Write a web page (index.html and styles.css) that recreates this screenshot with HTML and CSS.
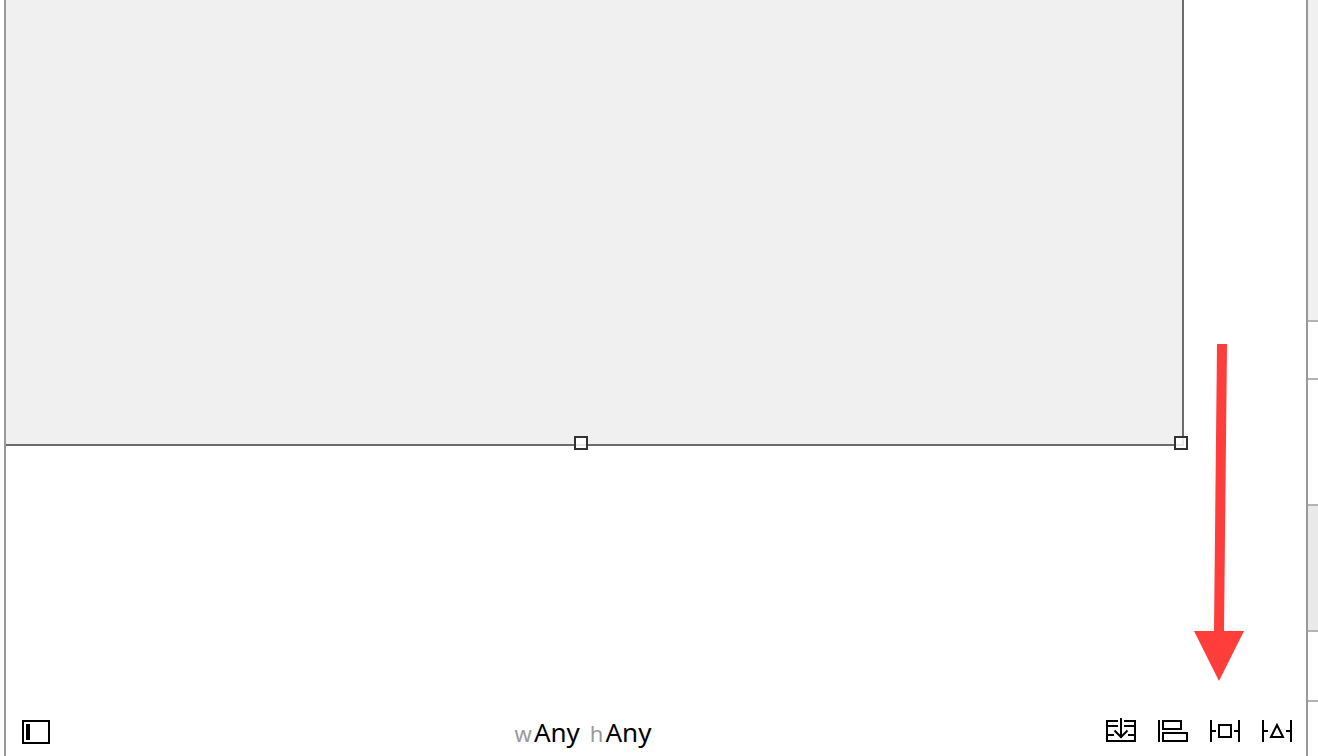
FILE: index.html
```html
<!DOCTYPE html>
<html lang="en">
<head>
<meta charset="utf-8">
<title>Interface Builder</title>
<link rel="stylesheet" href="styles.css">
</head>
<body>
<div class="workspace">
  <main class="editor">
    <section class="canvas" aria-label="Canvas">
      <div class="scene">
        <span class="handle handle-bottom"></span>
        <span class="handle handle-corner"></span>
      </div>
      <svg class="pointer" width="50" height="338" viewBox="0 0 50 338" aria-hidden="true">
        <path fill="#ff3d3a" d="M23 0H33L30 287H50L25 337L0 287H20Z"/>
      </svg>
    </section>
    <footer class="bar">
      <button class="tool" aria-label="Toggle document outline">
        <svg width="28" height="24" viewBox="0 0 28 24"><path class="line" d="M1 1H27V23H1Z"/><path d="M4 4H8V20H4Z"/></svg>
      </button>
      <button class="size-class"><span class="axis">w</span><span class="value">Any</span><span class="axis axis-height">h</span><span class="value">Any</span></button>
      <div class="tools">
        <button class="tool" aria-label="Stack">
          <svg width="30" height="24" viewBox="0 0 30 24"><path class="line" d="M12 3H1V23H29V3H18M1 8H12M18 8H29M1 17H8M22 17H29M15 0V20"/><path class="line" d="M8.500 12.500L15 19L21.500 12.500"/></svg>
        </button>
        <button class="tool" aria-label="Align">
          <svg width="30" height="24" viewBox="0 0 30 24"><path class="line" d="M1 2V24M5 3H23V11H5ZM5 15H29V23H5Z"/></svg>
        </button>
        <button class="tool" aria-label="Pin">
          <svg width="30" height="24" viewBox="0 0 30 24"><path class="line" d="M1 2V24M29 2V24M2 13H6M24 13H28M9 7H21V19H9Z"/></svg>
        </button>
        <button class="tool" aria-label="Resolve Auto Layout issues">
          <svg width="30" height="24" viewBox="0 0 30 24"><path class="line" d="M1 2V24M29 2V24M2 13H6M24 13H28M15 7L9 19H21Z"/></svg>
        </button>
      </div>
    </footer>
  </main>
  <aside class="inspector" aria-label="Inspector">
    <div class="panel panel-top"></div>
    <div class="panel panel-title"></div>
    <div class="panel panel-fields"></div>
    <div class="panel panel-selected"></div>
    <div class="panel panel-row"></div>
  </aside>
</div>
</body>
</html>
```
FILE: styles.css
```css
* {
  box-sizing: border-box;
}

body {
  margin: 0;
  background: #fff;
  font-family: "Noto Sans", "Open Sans", sans-serif;
}

.workspace {
  display: flex;
  height: 100vh;
  padding-left: 4px;
  overflow: hidden;
}

.editor {
  flex: 1;
  display: flex;
  flex-direction: column;
  border-left: 2px solid #999;
  border-right: 2px solid #999;
}

.canvas {
  position: relative;
  flex: 1;
  display: flex;
  padding: 0 122px 262px 0;
}

.scene {
  position: relative;
  flex: 1;
  background: #f0f0f0;
  border-right: 2px solid #6b6b6b;
  border-bottom: 2px solid #6b6b6b;
}

.handle {
  position: absolute;
  bottom: -6px;
  width: 14px;
  height: 14px;
  border: 2px solid #333;
  background: rgba(255, 255, 255, 0.85);
}

.handle-bottom {
  left: calc(50% - 20px);
}

.handle-corner {
  right: -6px;
}

.pointer {
  position: absolute;
  right: 62px;
  bottom: 26px;
}

.bar {
  display: grid;
  grid-template-columns: 1fr auto 1fr;
  align-items: center;
  height: 48px;
  padding: 0 14px 0 16px;
}

.tool,
.size-class {
  display: flex;
  padding: 0;
  border: 0;
  background: none;
  color: #000;
  font-family: inherit;
}

.tool {
  justify-self: start;
}

.tool .line {
  fill: none;
  stroke: #000;
  stroke-width: 2;
}

.size-class {
  align-items: baseline;
  margin-right: 148px;
}

.axis {
  margin-right: 2px;
  color: #999;
  font-size: 22px;
}

.axis-height {
  margin-left: 10px;
}

.value {
  font-size: 26px;
}

.tools {
  display: flex;
  justify-self: end;
  gap: 22px;
  padding-bottom: 4px;
}

.inspector {
  width: 10px;
  display: flex;
  flex-direction: column;
}

.panel {
  border-bottom: 2px solid #b3b3b3;
}

.panel-top {
  height: 322px;
  background: #f0f0f0;
}

.panel-title {
  height: 58px;
}

.panel-fields {
  height: 126px;
}

.panel-selected {
  height: 126px;
  background: #e9e9e9;
}

.panel-row {
  height: 70px;
}
```
